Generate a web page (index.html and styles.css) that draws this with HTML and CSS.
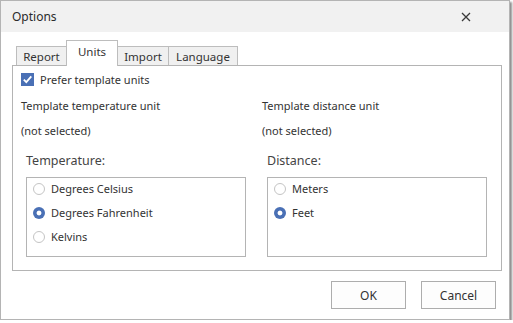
FILE: index.html
```html
<!DOCTYPE html>
<html lang="en">
<head>
    <meta charset="UTF-8">
    <title>Options</title>
    <link rel="stylesheet" href="styles.css">
</head>
<body>
<div class="window">
    <div class="titlebar">
        <span class="title">Options</span>
        <svg class="close" width="10" height="10" viewBox="0 0 10 10">
            <path d="M1 1 L9 9 M9 1 L1 9" stroke="#3a3a3a" stroke-width="1.3" fill="none"/>
        </svg>
    </div>
    <div class="content">
        <div class="tabs">
            <div class="tab tab-report">Report</div>
            <div class="tab tab-units active">Units</div>
            <div class="tab tab-import">Import</div>
            <div class="tab tab-language">Language</div>
        </div>
        <div class="panel">
            <div class="check-row">
                <span class="checkbox">
                    <svg width="13" height="13" viewBox="0 0 13 13">
                        <path d="M2.8 6.6 L5.3 9.2 L10.3 3.4" stroke="#fff" stroke-width="1.8" fill="none"/>
                    </svg>
                </span>
                <span>Prefer template units</span>
            </div>
            <div class="columns">
                <div class="column">
                    <div class="line">Template temperature unit</div>
                    <div class="line">(not selected)</div>
                    <div class="group">
                        <div class="group-label">Temperature:</div>
                        <div class="group-box">
                            <div class="radio-row"><span class="radio"></span>Degrees Celsius</div>
                            <div class="radio-row"><span class="radio checked"></span>Degrees Fahrenheit</div>
                            <div class="radio-row"><span class="radio"></span>Kelvins</div>
                        </div>
                    </div>
                </div>
                <div class="column">
                    <div class="line">Template distance unit</div>
                    <div class="line">(not selected)</div>
                    <div class="group">
                        <div class="group-label">Distance:</div>
                        <div class="group-box">
                            <div class="radio-row"><span class="radio"></span>Meters</div>
                            <div class="radio-row"><span class="radio checked"></span>Feet</div>
                        </div>
                    </div>
                </div>
            </div>
        </div>
        <div class="buttons">
            <button>OK</button>
            <button>Cancel</button>
        </div>
    </div>
</div>
</body>
</html>
```

FILE: styles.css
```css
body {
    margin: 0;
    padding: 0;
    background-color: #ffffff;
    font-family: "Noto Sans", "Open Sans", sans-serif;
    font-size: 11px;
    color: #333333;
}
.window {
    width: 508px;
    height: 318px;
    border: 1px solid #b4b4b4;
    background-color: #ffffff;
    box-shadow: 2px 2px 2px #8e8e8e;
    display: flex;
    flex-direction: column;
}
.titlebar {
    height: 31px;
    background-color: #f1f1f1;
    display: flex;
    align-items: center;
    justify-content: space-between;
    padding: 0 38px 0 11px;
}
.title {
    font-size: 12px;
    color: #2b2b2b;
}
.content {
    padding: 8px 7px 0 11px;
}
.tabs {
    display: flex;
    align-items: flex-end;
    padding-left: 4px;
    height: 25px;
}
.tab {
    height: 19px;
    line-height: 19px;
    border: 1px solid #bdbdbd;
    border-bottom: none;
    background-color: #f0f0f0;
    text-align: center;
    box-sizing: border-box;
    margin-right: -1px;
    font-size: 11.5px;
}
.tab-report { width: 51px; }
.tab-units { width: 52px; }
.tab-import { width: 52px; }
.tab-language { width: 70px; }
.tab.active {
    height: 26px;
    line-height: 22px;
    background-color: #ffffff;
    margin-bottom: -1px;
    position: relative;
    z-index: 1;
}
.panel {
    border: 1px solid #b4b4b4;
    height: 206px;
    box-sizing: border-box;
    padding: 7px 8px 0 8px;
}
.check-row {
    display: flex;
    align-items: center;
    height: 13px;
    gap: 6px;
}
.checkbox {
    width: 13px;
    height: 13px;
    background-color: #4a70b5;
    display: block;
}
.checkbox svg {
    display: block;
}
.columns {
    display: grid;
    grid-template-columns: 241px 1fr;
    margin-top: 7px;
}
.line {
    height: 25px;
    line-height: 25px;
}
.group {
    padding-left: 5px;
}
.group-label {
    font-size: 12.5px;
    color: #444444;
    height: 20px;
    line-height: 20px;
    margin-top: 8px;
    margin-bottom: 6px;
}
.group-box {
    border: 1px solid #b4b4b4;
    height: 80px;
    width: 220px;
    box-sizing: border-box;
    padding: 0 0 0 6px;
    display: flex;
    flex-direction: column;
    gap: 3px;
}
.radio-row {
    height: 21px;
    display: flex;
    align-items: center;
    gap: 6px;
}
.radio {
    width: 12px;
    height: 12px;
    border-radius: 50%;
    border: 1px solid #c4c4c4;
    box-sizing: border-box;
    background-color: #ffffff;
}
.radio.checked {
    border: none;
    background: radial-gradient(circle, #ffffff 0, #ffffff 2px, #4a70b5 2.8px);
}
.buttons {
    display: flex;
    justify-content: flex-end;
    gap: 15px;
    padding-right: 6px;
    margin-top: 10px;
}
button {
    width: 75px;
    height: 28px;
    border: 1px solid #adadad;
    background-color: #fdfdfd;
    font-family: "Noto Sans", "Open Sans", sans-serif;
    font-size: 12px;
    color: #333333;
}
```
